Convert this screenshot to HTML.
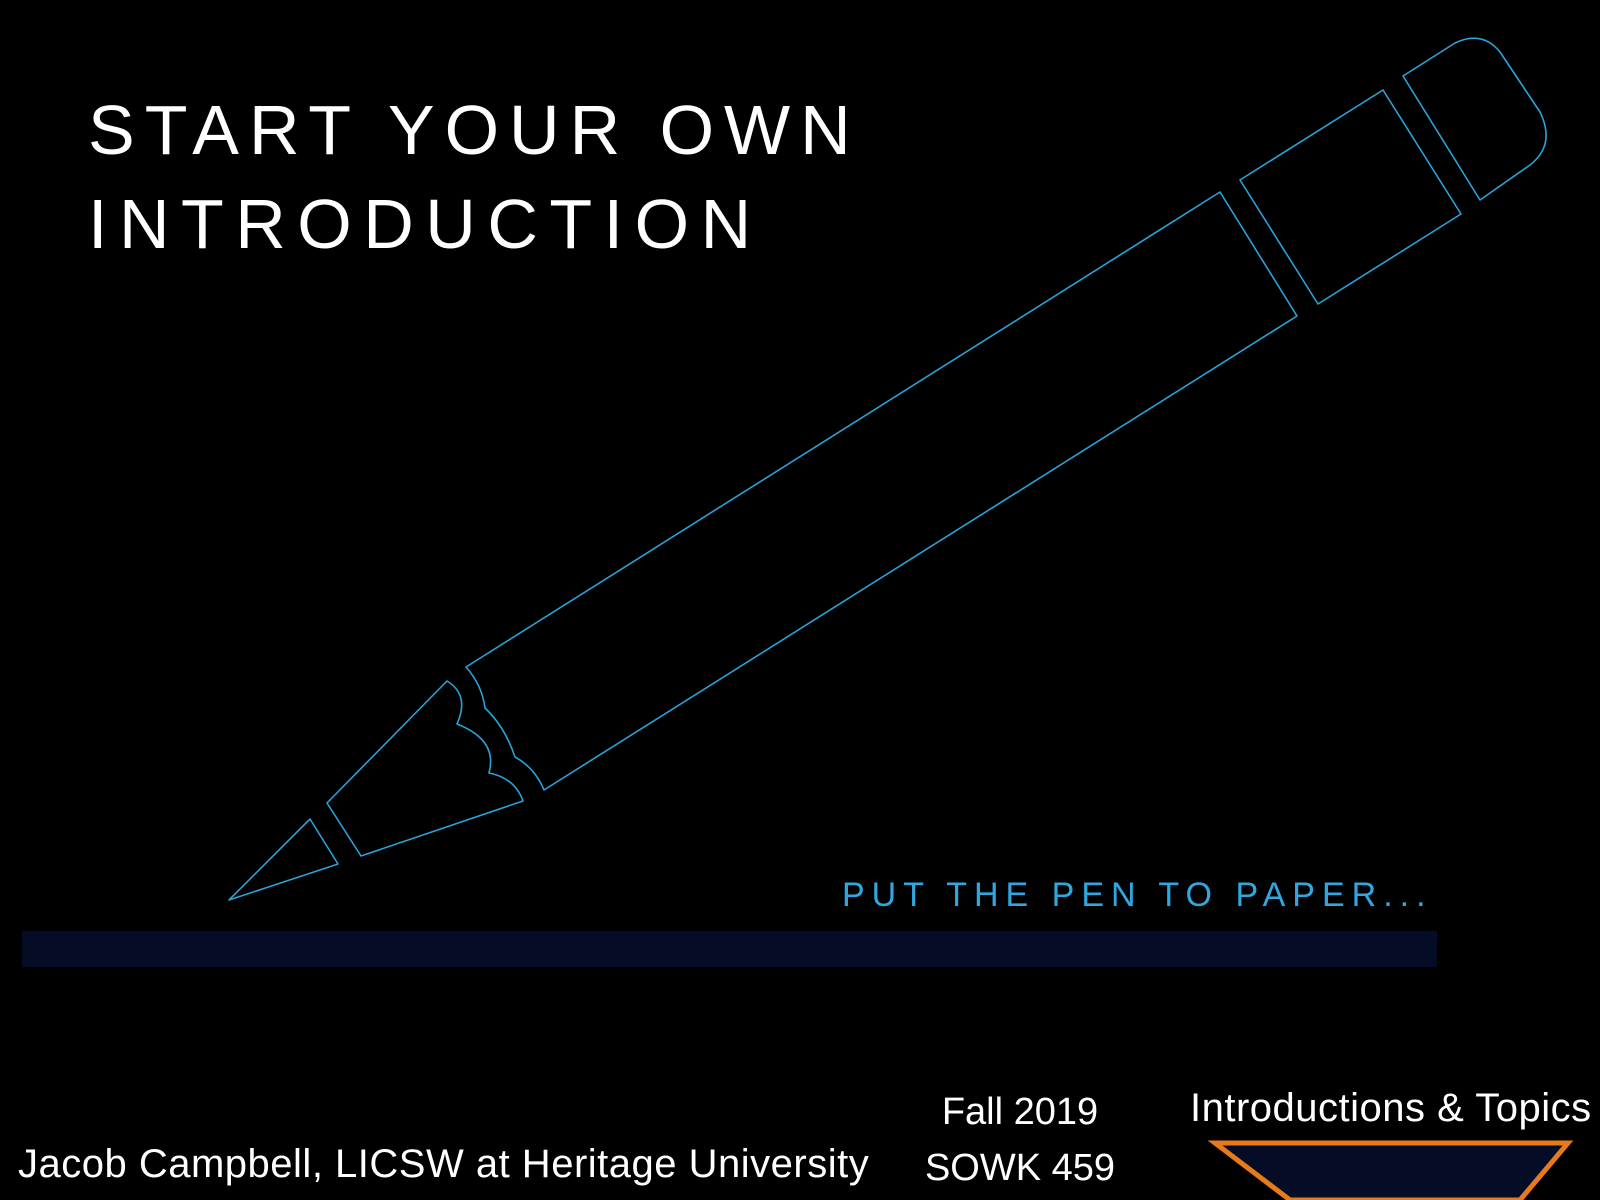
<!DOCTYPE html>
<html><head><meta charset="utf-8"><style>
html,body{margin:0;padding:0;background:#000;width:1600px;height:1200px;overflow:hidden}
.t{position:absolute;font-family:"Liberation Sans",sans-serif;color:#fff;white-space:nowrap}
</style></head><body>
<svg width="1600" height="1200" style="position:absolute;left:0;top:0">
<g fill="none" stroke="#29a3d6" stroke-width="1.6" stroke-linejoin="round">
<path d="M466,667 L1220,192 L1297,316 L544,790 Q535,768 515,757 Q505,727 485,708 Q482,685 466,667 Z"/>
<path d="M1240,180 L1383,90 L1461,214 L1318,304 Z"/>
<path d="M1403,76 L1455,43 Q1482,30 1500,52 L1540,112 Q1556,145 1530,165 L1480,200 Z"/>
<path d="M447,681 L327,803 L361,856 L523,801 Q515,778 489,773 Q498,740 457,724 Q470,695 447,681 Z"/>
<path d="M229,900 L310,819 L338,864 Z"/>
</g>
<rect x="22" y="931" width="1415" height="36" fill="#050c25"/>
<path d="M1215,1143 L1568,1143 L1520,1200 L1290,1200 Z" fill="#050c25" stroke="#e87a1a" stroke-width="5"/>
</svg>
<div class="t" style="left:88px;top:83px;font-size:70px;letter-spacing:10px;line-height:94px">START YOUR OWN<br><span style="letter-spacing:11.5px">INTRODUCTION</span></div>
<div class="t" style="left:842px;top:876px;font-size:34px;letter-spacing:7px;color:#2fa8e0">PUT THE PEN TO PAPER...</div>
<div class="t" style="left:18px;top:1142px;font-size:40px;letter-spacing:0.5px">Jacob Campbell, LICSW at Heritage University</div>
<div class="t" style="left:900px;top:1084px;width:240px;text-align:center;font-size:38px;line-height:56px">Fall 2019<br>SOWK 459</div>
<div class="t" style="left:1190px;top:1086px;font-size:40px;letter-spacing:0.5px">Introductions &amp; Topics</div>
</body></html>
